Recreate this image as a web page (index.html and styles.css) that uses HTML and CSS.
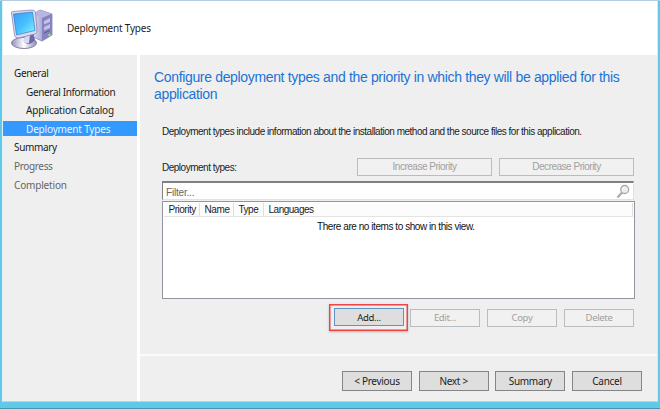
FILE: index.html
```html
<!DOCTYPE html>
<html lang="en">
<head>
<meta charset="utf-8">
<title>Deployment Types</title>
<link rel="stylesheet" href="styles.css">
</head>
<body>
<div class="dialog">
  <header class="banner">
    <svg class="computer" width="44" height="42" viewBox="0 0 44 42">
      <defs>
        <linearGradient id="screen" x1="0" y1="0" x2="1" y2="1"><stop offset="0" stop-color="#3c9df5"/><stop offset=".5" stop-color="#45bfff"/><stop offset="1" stop-color="#8cf6ff"/></linearGradient>
        <linearGradient id="tower" x1="0" y1="0" x2="1" y2="0"><stop offset="0" stop-color="#dcdcf5"/><stop offset="1" stop-color="#7775b5"/></linearGradient>
        <linearGradient id="foot" x1="0" y1="0" x2="1" y2="0"><stop offset="0" stop-color="#9290bd"/><stop offset=".5" stop-color="#fff"/><stop offset="1" stop-color="#8d8abd"/></linearGradient>
      </defs>
      <path d="M22 7 29 3 41 7 41 28 31 34 22 30Z" fill="url(#tower)" stroke="#8582ba" stroke-width=".800"/>
      <path d="M22 7 29 3 41 7 31 11Z" fill="#b8b6df"/>
      <path d="M31 11 41 7 41 28 31 34Z" fill="#8683c0"/>
      <path d="M33 14 39 11V15L33 17.500ZM33 20 39 17V21L33 23.500Z" fill="#c3c0e6"/>
      <path d="M33 26 39 23.500" stroke="#5e5a9b"/>
      <circle cx="38.500" cy="28" r="1.300" fill="#82ec68"/>
      <ellipse cx="13" cy="36" rx="12.500" ry="5.500" fill="url(#foot)" stroke="#85829f"/>
      <path d="M13 28 22 26 24 33Q18 40 13 35Z" fill="#6a67aa"/>
      <path d="M14 29 19 28 18 36Q14 37 12 34Z" fill="#d9d8ee"/>
      <path d="M.500 6Q0 4.500 2 4.500L21 3Q24 3 24.500 5.500L26 23.500Q26 26 24 27L7 31Q4 31 3.500 28Z" fill="#dddcf2" stroke="#8886b8" stroke-width=".800"/>
      <path d="M2.500 7 21.500 5 24 23.500 5.500 28Z" fill="url(#screen)" stroke="#327bc8" stroke-width=".700"/>
    </svg>
    <h1 class="banner-title">Deployment Types</h1>
  </header>
  <div class="body">
    <nav class="steps">
      <div class="step tight">General</div>
      <div class="step sub tight">General Information</div>
      <div class="step sub">Application Catalog</div>
      <div class="step sub current">Deployment Types</div>
      <div class="step tight">Summary</div>
      <div class="step tight pending">Progress</div>
      <div class="step pending">Completion</div>
    </nav>
    <div class="main">
      <section class="page">
        <h2 class="heading">Configure deployment types and the priority in which they will be applied for this<br>application</h2>
        <p class="intro">Deployment types include information about the installation method and the source files for this application.</p>
        <div class="toolbar">
          <span class="list-label">Deployment types:</span>
          <button class="btn wide" disabled>Increase Priority</button>
          <button class="btn wide" disabled>Decrease Priority</button>
        </div>
        <div class="filter">
          <span>Filter...</span>
          <svg width="15" height="15" viewBox="0 0 15 15"><path d="M1.500 13.500 6.500 8" stroke="#aaa" stroke-width="2.200"/><circle cx="8.700" cy="5.500" r="4" fill="#ededed" stroke="#a9a9a9" stroke-width="1.300"/><path d="M6.500 5Q7 3 9 3" fill="none" stroke="#fff"/></svg>
        </div>
        <div class="list">
          <div class="columns">
            <span class="col c1">Priority</span><span class="col c2">Name</span><span class="col c3">Type</span><span class="col c4">Languages</span>
          </div>
          <p class="empty">There are no items to show in this view.</p>
        </div>
        <div class="actions">
          <div class="highlight"><button class="btn add">Add...</button></div>
          <button class="btn" disabled>Edit...</button>
          <button class="btn" disabled>Copy</button>
          <button class="btn" disabled>Delete</button>
        </div>
      </section>
      <footer class="footer">
        <button class="btn">&lt; Previous</button>
        <button class="btn">Next &gt;</button>
        <button class="btn">Summary</button>
        <button class="btn">Cancel</button>
      </footer>
    </div>
  </div>
</div>
</body>
</html>
```
FILE: styles.css
```css
* { box-sizing: border-box; }
body {
  margin: 0;
  width: 660px;
  height: 409px;
  overflow: hidden;
  padding: 1px 2px 0;
  background: #62c8e8;
  border-bottom: 1px solid #4796ad;
  box-shadow: inset 0 1px #b4cce0;
  font-family: "Noto Sans", "Open Sans", sans-serif;
  font-size: 10px;
  color: #1c1c1c;
}
h1, h2, p { margin: 0; font-weight: 400; }
.dialog {
  height: 401px;
  display: flex;
  flex-direction: column;
  background: #efefef;
  border-left: 1px solid #e2f1f5;
  border-right: 1px solid #dce8ec;
  border-bottom: 1px solid #c2d2d8;
}
.banner {
  height: 54px;
  flex: none;
  display: flex;
  background: #fff;
}
.computer { margin: 6px 0 0 8px; }
.banner-title {
  margin-left: 12px;
  font-size: 10px;
  line-height: 54px;
  letter-spacing: -.2px;
  white-space: nowrap;
}
.body { flex: 1; min-height: 0; display: flex; }
.steps {
  width: 137px;
  padding-top: 10px;
  border-right: 3px solid #fff;
}
.step {
  height: 15px;
  margin-bottom: 3.6px;
  padding: 1px 0 0 11px;
  line-height: 15px;
  letter-spacing: -.17px;
  white-space: nowrap;
}
.tight { letter-spacing: -.35px; }
.sub { padding-left: 23px; }
.current { background: #3399ff; color: #eaf5ff; }
.pending { color: #666; }
.main { flex: 1; min-width: 0; display: flex; flex-direction: column; }
.page {
  height: 299px;
  padding: 14px 23px 0 22px;
  font-family: "Liberation Sans", sans-serif;
  font-size: 10px;
  letter-spacing: -.49px;
}
.heading {
  height: 57px;
  margin-left: -8px;
  font-size: 14px;
  line-height: 17px;
  letter-spacing: -.34px;
  color: #1c73d4;
  white-space: nowrap;
}
.intro { height: 32px; line-height: 12px; white-space: nowrap; }
.toolbar { height: 18px; display: flex; gap: 7px; }
.list-label { margin-right: auto; line-height: 19px; }
.btn {
  width: 70px;
  height: 20px;
  padding: 0;
  border: 1px solid #858585;
  background: #dedede;
  color: #1c1c1c;
  font: 10px/18px "Noto Sans", "Open Sans", sans-serif;
  letter-spacing: -.3px;
  white-space: nowrap;
}
.btn:disabled { background: #f1f1f1; border-color: #b9bdc0; color: #a0a0a0; }
.btn.wide {
  width: 135px;
  height: 18px;
  font: 10px/16px "Liberation Sans", sans-serif;
  letter-spacing: -.49px;
}
.filter {
  height: 19px;
  margin-top: 5px;
  padding: 1px 2px 0 3px;
  display: flex;
  justify-content: space-between;
  border: 1px solid #808080;
  border-top-width: 2px;
  border-right-color: #e0e0e0;
  border-bottom-color: #e2e2e2;
  background: #fff;
  color: #666;
  line-height: 17px;
  letter-spacing: -.2px;
}
.list {
  width: 473px;
  height: 98px;
  margin-top: 1px;
  padding: 1px;
  border: 1px solid #9295a0;
  background: #fff;
}
.columns {
  display: flex;
  height: 14px;
  background: #fcfcfc;
  border-bottom: 1px solid #e3e3e3;
  line-height: 14px;
}
.col { padding-left: 4.5px; border-right: 1px solid #dedede; }
.c1 { width: 36px; }
.c2 { width: 34px; letter-spacing: -.7px; letter-spacing: -.4px; }
.c3 { width: 30px; }
.c4 { flex: 1; }
.empty { margin: 4px 0 0 153px; line-height: 12px; letter-spacing: -.44px; color: #111; white-space: nowrap; }
.actions {
  display: flex;
  align-items: center;
  justify-content: flex-end;
  gap: 7px;
  margin-top: 5px;
}
.actions .btn { height: 18px; line-height: 15px; font-size: 9.5px; letter-spacing: -.35px; }
.highlight {
  display: flex;
  width: 79px;
  height: 27px;
  margin-right: -5px;
  padding: 3px 3px 3px 4px;
  border: 1px solid #f04343;
  box-shadow: 0 1px 2px #8888, inset 0 0 0 .5px #f04343;
}
.actions .add { border-color: #5d96c5; }
.footer {
  flex: 1;
  display: flex;
  gap: 6.7px;
  justify-content: flex-end;
  padding: 15px 15px 0 0;
  border-top: 2px solid #fbfbfb;
}
```
